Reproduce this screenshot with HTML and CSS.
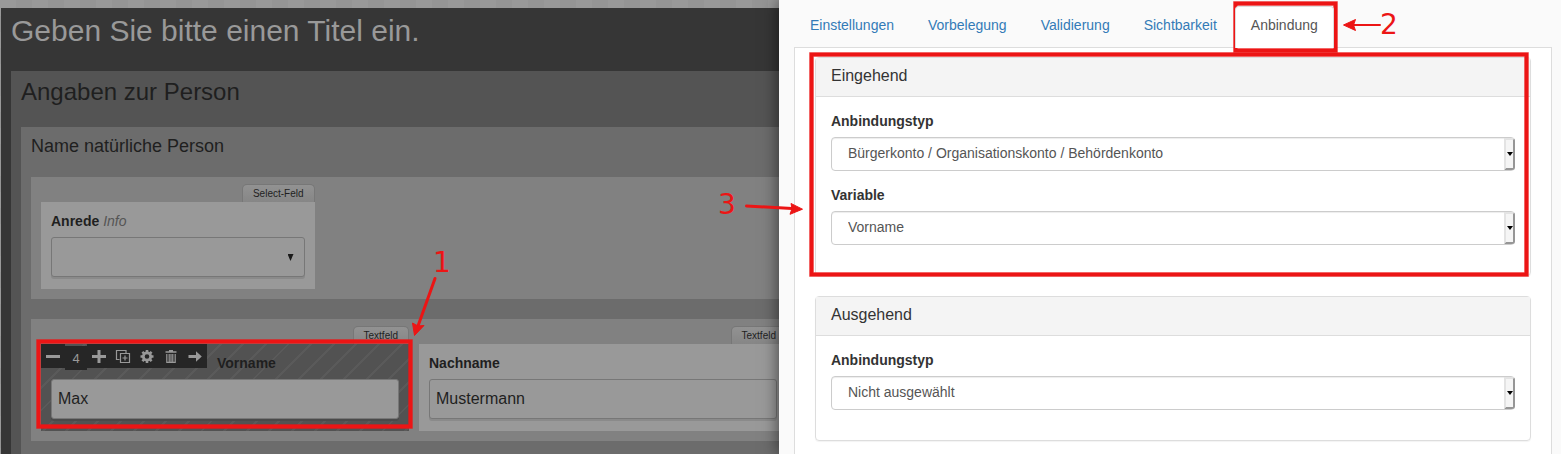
FILE: index.html
```html
<!DOCTYPE html>
<html lang="de">
<head>
<meta charset="utf-8">
<meta name="viewport" content="width=device-width, initial-scale=1">
<title>Formular-Editor</title>
<link rel="stylesheet" href="styles.css">
</head>
<body>
<div class="app">
  <main class="editor">
    <h1 class="form-title">Geben Sie bitte einen Titel ein.</h1>
    <section class="section">
      <h2 class="section-title">Angaben zur Person</h2>
      <div class="group">
        <h3 class="group-title">Name natürliche Person</h3>
        <div class="row">
          <div class="field span-3">
            <span class="field-type">Select-Feld</span>
            <div class="field-head"><label for="anrede">Anrede</label> <em>Info</em></div>
            <div class="field-select"><select id="anrede" class="control"><option></option></select></div>
          </div>
        </div>
        <div class="row">
          <div class="field span-4 selected">
            <span class="field-type">Textfeld</span>
            <div class="field-head">
              <div class="toolbar">
                <button type="button" aria-label="Schmaler"><svg viewBox="0 0 24 24"><path d="M5 11h14v3h-14z"/></svg></button>
                <input type="text" value="4" aria-label="Breite">
                <button type="button" aria-label="Breiter"><svg viewBox="0 0 24 24"><path d="M10.500 6h3v5h5.500v3h-5.500v5h-3v-5h-5.500v-3h5.500z"/></svg></button>
                <button type="button" aria-label="Duplizieren"><svg viewBox="0 0 24 24"><path class="line" d="M8.500 15.500H5.500V6.500h9.500V9M9.500 9.500h9v9h-9zM14 11.500v5M11.500 14h5"/></svg></button>
                <button type="button" aria-label="Einstellungen"><svg viewBox="0 0 24 24"><circle class="ring" cx="12" cy="12.500" r="3.700"/><path class="teeth" d="M12 6v2.500M12 16.500V19M5.500 12.500H8M16 12.500h2.500M7.400 7.900l1.800 1.800M14.800 15.300l1.800 1.800M16.600 7.900l-1.800 1.800M9.200 15.300l-1.800 1.800"/></svg></button>
                <button type="button" aria-label="Löschen"><svg viewBox="0 0 24 24"><path d="M6.500 7.200h3.500V6h4v1.200h3.500V8.800h-11z"/><path class="line" d="M7.800 10v8.400h8.400V10M10.200 10v8M12 10v8M13.800 10v8"/></svg></button>
                <button type="button" aria-label="Verschieben"><svg viewBox="0 0 24 24"><path d="M5.500 11H13V7.200l5.800 5.300-5.800 5.300V14H5.500z"/></svg></button>
              </div>
              <label for="vorname">Vorname</label>
            </div>
            <input id="vorname" class="control" type="text" value="Max">
          </div>
          <div class="field span-4">
            <span class="field-type">Textfeld</span>
            <div class="field-head"><label for="nachname">Nachname</label></div>
            <input id="nachname" class="control" type="text" value="Mustermann">
          </div>
        </div>
      </div>
    </section>
  </main>

  <aside class="drawer">
    <nav class="tabs">
      <a href="#einstellungen">Einstellungen</a>
      <a href="#vorbelegung">Vorbelegung</a>
      <a href="#validierung">Validierung</a>
      <a href="#sichtbarkeit">Sichtbarkeit</a>
      <a href="#anbindung" class="active">Anbindung</a>
    </nav>
    <div class="tab-content">
      <section class="panel">
        <h4>Eingehend</h4>
        <div class="panel-body">
          <div class="form-group">
            <label for="typ-ein">Anbindungstyp</label>
            <div class="dropdown"><select id="typ-ein"><option>Bürgerkonto / Organisationskonto / Behördenkonto</option></select></div>
          </div>
          <div class="form-group">
            <label for="variable">Variable</label>
            <div class="dropdown"><select id="variable"><option>Vorname</option></select></div>
          </div>
        </div>
      </section>
      <section class="panel">
        <h4>Ausgehend</h4>
        <div class="panel-body">
          <div class="form-group">
            <label for="typ-aus">Anbindungstyp</label>
            <div class="dropdown"><select id="typ-aus"><option>Nicht ausgewählt</option></select></div>
          </div>
        </div>
      </section>
    </div>
  </aside>

  <svg class="notes" width="1561" height="454" viewBox="0 0 1561 454">
    <g class="halo">
      <rect x="38.500" y="341.500" width="372" height="85"/>
      <rect x="1235.500" y="3.500" width="100" height="47"/>
      <rect x="811.500" y="54.500" width="715" height="220"/>
    </g>
    <g class="frame">
      <rect x="38.500" y="341.500" width="372" height="85"/>
      <rect x="1235.500" y="3.500" width="100" height="47"/>
      <rect x="811.500" y="54.500" width="715" height="220"/>
    </g>
    <g class="arrow">
      <path class="shaft" d="M435 278.500L418 326"/>
      <path d="M414.500 335.500L412.500 323l5.500 3 6-0.500z"/>
      <path class="shaft thin" d="M1380 25H1353"/>
      <path d="M1343.500 25l12-5.500-2 5.500 2 5.500z"/>
      <path class="shaft" d="M746.500 206L792 208.500"/>
      <path d="M802.500 209.200L791 203.500l1 5.100-2 5.700z"/>
    </g>
    <text x="433" y="272">1</text>
    <text x="1380" y="34">2</text>
    <text x="718" y="214">3</text>
  </svg>
</div>
</body>
</html>
```
FILE: styles.css
```css
*, *::before, *::after { box-sizing: border-box; }

body {
  margin: 0;
  font: 14px/20px "Liberation Sans", Arial, sans-serif;
  color: #333;
}

h1, h2, h3, h4 { margin: 0; font-weight: 400; }

.app {
  position: relative;
  height: 100vh;
  overflow: hidden;
  padding: 8px 0 0 1px;
  background: repeating-conic-gradient(#959595 0 25%, #999 0 50%) 0 0 / 32px 32px;
}

/* Editor */
.editor {
  min-height: 100%;
  padding-left: 10px;
  background: #363636;
  color: #1f1f1f;
}

.form-title { height: 63px; font-size: 30px; line-height: 46px; color: #999; }
.section { padding-left: 10px; background: #545454; }
.section-title { height: 56px; font-size: 24px; line-height: 42px; }
.group { padding: 0 0 20px 10px; background: #6c6c6c; }
.group-title { height: 50px; font-size: 18px; line-height: 38px; }

.row {
  display: grid;
  grid-template-columns: repeat(16, minmax(0, 1fr));
  column-gap: 10px;
  margin-bottom: 20px;
  padding: 25px 18px 10px 10px;
  background: #818181;
}

.field { position: relative; height: 87px; background: #999; padding: 0 10px; }
.span-3 { grid-column: span 3; }
.span-4 { grid-column: span 4; }

.field-type {
  position: absolute;
  right: 0;
  bottom: 100%;
  height: 18px;
  padding: 0 10px;
  border: 1px solid #777;
  border-bottom: 0;
  border-radius: 5px 5px 0 0;
  background: linear-gradient(#929292, #868686);
  font-size: 10px;
  line-height: 18px;
}

.field-head { height: 35px; padding-top: 9px; }
.field-head label { font-weight: 700; }
.field-head em { color: #555; }

.selected {
  background: repeating-linear-gradient(135deg, #525252 0 14px, #5a5a5a 14px 16px);
}
.selected .field-head { display: flex; gap: 10px; margin-left: -10px; padding-top: 0; }
.selected .field-head label { padding-top: 9px; }

.control {
  display: block;
  width: 100%;
  height: 40px;
  padding: 0 6px;
  border: 1px solid #777;
  border-radius: 3px;
  background: #999;
  box-shadow: 0 2px 0 #8a8a8a;
  font: 16px "Liberation Sans", Arial, sans-serif;
  color: #1f1f1f;
  appearance: none;
}
.selected .control { box-shadow: 0 2px 0 #4a4a4a; }

.field-select { position: relative; }
.field-select::after {
  content: "";
  position: absolute;
  right: 11px;
  top: 17px;
  width: 6px;
  height: 7px;
  background: #1a1a1a;
  clip-path: polygon(0 0, 100% 0, 50% 100%);
  pointer-events: none;
}

.toolbar { display: flex; height: 24px; }
.toolbar button, .toolbar input {
  width: 24px;
  height: 24px;
  padding: 0;
  border: 0;
  background: #262626;
  color: #999;
}
.toolbar input {
  width: 22px;
  margin-top: 2px;
  font: 13px "Liberation Sans", Arial, sans-serif;
  text-align: center;
}
.toolbar svg { display: block; width: 24px; height: 24px; fill: #999; }
.toolbar .line { fill: none; stroke: #999; stroke-width: 1.2; }
.toolbar .ring { fill: none; stroke: #999; stroke-width: 2.800; }
.toolbar .teeth { fill: none; stroke: #999; stroke-width: 2.600; }

/* Drawer */
.drawer {
  position: absolute;
  top: 0;
  right: 0;
  bottom: 0;
  width: 50.1%;
  padding: 6px 9px 0 15px;
  background: #fafafa;
  box-shadow: 0 0 16px rgba(0, 0, 0, .6);
}

.tabs { display: flex; gap: 2px; }
.tabs a {
  height: 42px;
  padding: 8px 15px 0;
  border: 1px solid transparent;
  border-bottom: 0;
  border-radius: 4px 4px 0 0;
  color: #337ab7;
  text-decoration: none;
}
.tabs .active { position: relative; z-index: 1; background: #fff; border-color: #ddd; color: #555; }

.tab-content {
  height: 100%;
  margin-top: -1px;
  padding: 9px 20px;
  border: 1px solid #ddd;
  background: #fff;
}

.panel {
  margin-bottom: 20px;
  border: 1px solid #ddd;
  border-radius: 4px;
  box-shadow: 0 1px 1px rgba(0, 0, 0, .05);
}
.panel h4 {
  height: 39px;
  padding-left: 15px;
  border-bottom: 1px solid #ddd;
  background: #f4f4f4;
  font-size: 16px;
  line-height: 36px;
}
.panel-body { padding: 15px; }
.form-group { margin-bottom: 15px; }
.form-group label { display: block; height: 25px; line-height: 18px; font-weight: 700; }

.dropdown { position: relative; }
.dropdown select {
  display: block;
  width: 100%;
  height: 34px;
  padding: 0 16px 2px;
  border: 1px solid #ccc;
  border-radius: 4px;
  background: #fff;
  box-shadow: inset 0 1px 1px rgba(0, 0, 0, .075);
  font: 14px "Liberation Sans", Arial, sans-serif;
  color: #555;
  appearance: none;
}
.dropdown::before {
  content: "";
  position: absolute;
  top: 1px;
  right: 0;
  width: 11px;
  height: 32px;
  border: 2px solid;
  border-color: #e3e3e3 #969696 #969696 #e3e3e3;
  border-radius: 0 3px 3px 0;
  background: #f5f5f5;
  pointer-events: none;
}
.dropdown::after {
  content: "";
  position: absolute;
  top: 15px;
  right: 2px;
  width: 6px;
  height: 4px;
  background: #000;
  clip-path: polygon(0 0, 100% 0, 50% 100%);
  pointer-events: none;
}

/* Numbered callouts */
.notes { position: absolute; top: 0; left: 0; pointer-events: none; }
.notes text { font: 28px "DejaVu Sans", sans-serif; fill: #ec1515; }
.halo { fill: none; stroke: #ec1515; stroke-opacity: .3; stroke-width: 5; }
.frame { fill: none; stroke: #ec1515; stroke-width: 4; }
.arrow { fill: #ec1515; stroke: #ec1515; stroke-linejoin: round; }
.arrow .shaft { stroke-width: 3; stroke-linecap: round; }
.arrow .thin { stroke-width: 2; }
```
